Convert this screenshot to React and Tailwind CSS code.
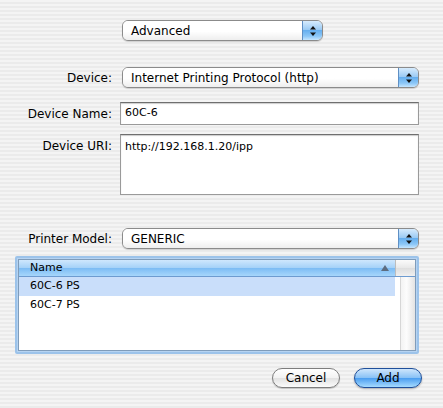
import React from 'react';

const font = { fontFamily: '"DejaVu Sans", "Liberation Sans", sans-serif' };

const Arrows = () => (
    <svg width="6" height="10" viewBox="0 0 6 10">
        <path d="M3 0 L6 3.5 L0 3.5 Z" fill="#111" />
        <path d="M0 6.5 L6 6.5 L3 10 Z" fill="#111" />
    </svg>
);

const Popup = ({ value, className = '' }) => (
    <div className={`flex h-[21px] rounded-[6px] border border-[#8b8b8b] overflow-hidden shadow-[0_1px_1px_rgba(0,0,0,0.15)] ${className}`}>
        <div className="flex-1 flex items-center pl-[8px] text-[12px] text-black bg-[linear-gradient(to_bottom,#ffffff,#ffffff_55%,#eeeeee)]">
            {value}
        </div>
        <div className="w-[20px] flex items-center justify-center border-l border-[#5f8fc4] bg-[linear-gradient(to_bottom,#d6ebfd,#9ccbf4_45%,#66afef_50%,#8cc7f7_80%,#c6e6ff)]">
            <Arrows />
        </div>
    </div>
);

export default function App() {
    return (
        <div
            style={font}
            className="w-[443px] h-[408px] bg-[repeating-linear-gradient(to_bottom,#f4f4f4_0px,#f4f4f4_2px,#ebebeb_2px,#ebebeb_4px)] text-black relative overflow-hidden"
        >
            {/* Top popup */}
            <div className="pt-[20px] pl-[122px]">
                <Popup value="Advanced" className="w-[201px]" />
            </div>

            {/* Device */}
            <div className="mt-[26px] flex items-center">
                <div className="w-[112px] text-right text-[12px]">Device:</div>
                <Popup value="Internet Printing Protocol (http)" className="ml-[10px] w-[297px]" />
            </div>

            {/* Device Name */}
            <div className="mt-[14px] flex items-center">
                <div className="w-[112px] text-right text-[12px]">Device Name:</div>
                <div className="ml-[8px] w-[299px] h-[23px] bg-white border border-[#9a9a9a] border-t-[#6f6f6f] shadow-[inset_0_1px_1px_rgba(0,0,0,0.2)] flex items-center px-[4px] text-[11px]">
                    60C-6
                </div>
            </div>

            {/* Device URI */}
            <div className="mt-[9px] flex items-start">
                <div className="w-[112px] text-right text-[12px] pt-[3px]">Device URI:</div>
                <div className="ml-[8px] w-[299px] h-[61px] bg-white border border-[#9a9a9a] border-t-[#6f6f6f] shadow-[inset_0_1px_1px_rgba(0,0,0,0.2)] px-[4px] pt-[5px] text-[11px] leading-[14px]">
                    http://192.168.1.20/ipp
                </div>
            </div>

            {/* Printer Model */}
            <div className="mt-[33px] flex items-center">
                <div className="w-[112px] text-right text-[12px]">Printer Model:</div>
                <Popup value="GENERIC" className="ml-[10px] w-[297px]" />
            </div>

            {/* List */}
            <div className="mt-[7px] ml-[15px] w-[404px] h-[98px] rounded-[2px] border-[2px] border-[#9cc3ea] bg-[#b6d3f1] p-[1px]">
                <div className="w-full h-full bg-white border border-[#7f9cba] flex flex-col">
                    <div className="flex h-[17px] border-b border-[#6d9bd0]">
                        <div className="flex-1 flex items-center justify-between pl-[11px] pr-[6px] text-[11px] bg-[linear-gradient(to_bottom,#cfe7fd,#a4d1f8_50%,#7dbcf4_52%,#a6d6fb)]">
                            <span>Name</span>
                            <svg width="8" height="6" viewBox="0 0 8 6">
                                <path d="M4 0 L8 6 L0 6 Z" fill="#5d6d80" />
                            </svg>
                        </div>
                        <div className="w-[20px] border-l border-[#bdbdbd] bg-[linear-gradient(to_bottom,#fbfbfb,#e8e8e8_50%,#dedede_52%,#f0f0f0)]" />
                    </div>
                    <div className="flex flex-1">
                        <div className="flex-1 flex flex-col text-[11px]">
                            <div className="h-[19px] flex items-center pl-[11px] bg-[#c9defa]">60C-6 PS</div>
                            <div className="h-[19px] flex items-center pl-[11px]">60C-7 PS</div>
                        </div>
                        <div className="w-[15px] ml-[5px] bg-[linear-gradient(to_right,#f3f3f3,#fcfcfc_40%,#e3e3e3)] border-l border-[#d6d6d6]" />
                    </div>
                </div>
            </div>

            {/* Buttons */}
            <div className="mt-[14px] flex justify-end pr-[21px] gap-[14px]">
                <button className="w-[68px] h-[20px] rounded-full border border-[#7d7d7d] bg-[linear-gradient(to_bottom,#ffffff,#f2f2f2_50%,#e2e2e2_52%,#fbfbfb)] text-[12px] leading-[18px] shadow-[0_1px_1px_rgba(0,0,0,0.2)]">
                    Cancel
                </button>
                <button className="w-[68px] h-[20px] rounded-full border border-[#1f4f9a] bg-[linear-gradient(to_bottom,#cfe6fc,#8ac2f6_48%,#4c9ef0_52%,#a5dbff)] text-[12px] leading-[18px] shadow-[0_1px_2px_rgba(0,0,0,0.3)]">
                    Add
                </button>
            </div>
        </div>
    );
}
